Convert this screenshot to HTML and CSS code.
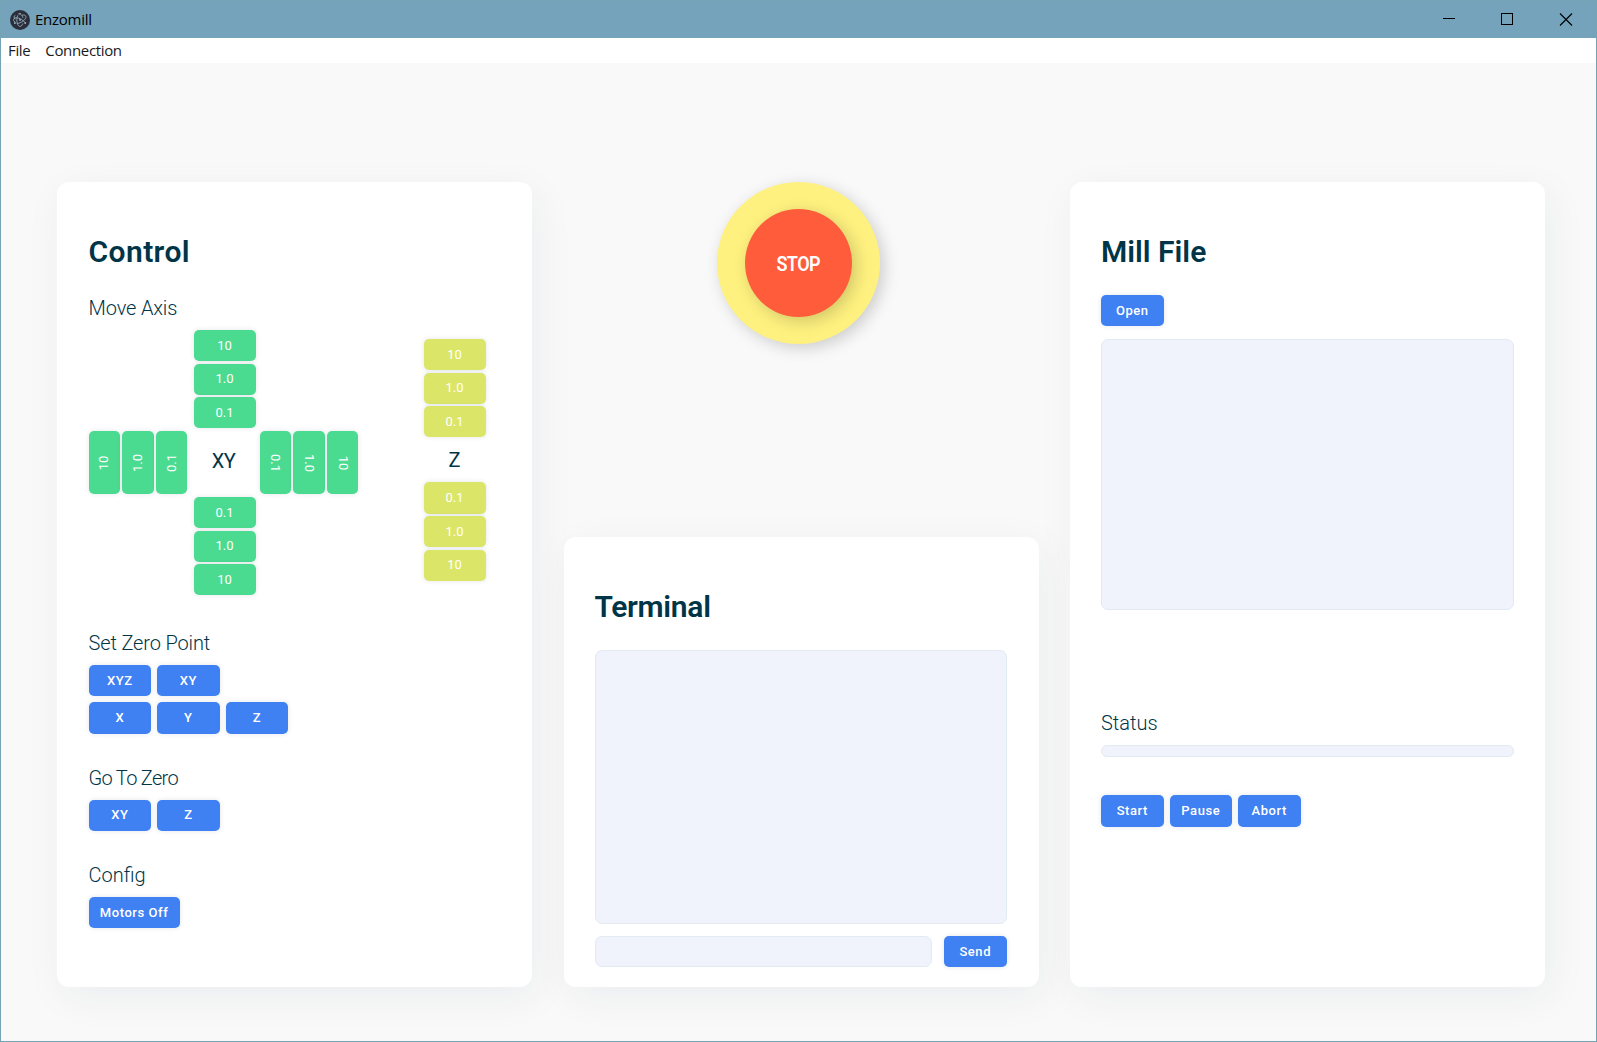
FILE: index.html
```html
<!DOCTYPE html>
<html lang="en">
<head>
<meta charset="utf-8">
<title>Enzomill</title>
<link rel="stylesheet" href="styles.css">
</head>
<body>
<div class="window">
  <header class="titlebar">
    <svg class="app-icon" width="20" height="20" viewBox="0 0 20 20">
      <circle cx="10" cy="10" r="10" fill="#2b2e3a"/>
      <g fill="none" stroke="#9fb9c6" stroke-width="0.8" stroke-linecap="round">
        <path d="M4.6 11.8C3.6 10.6 3.3 9.5 3.8 8.7c.9-1.5 4.200-1.300 7.500.6 1.500.9 2.700 1.900 3.500 2.900"/>
        <path d="M12.500 5.100c1.500-.3 2.700 0 3.200.8.900 1.500-.9 4.200-4.200 6.100-1.500.9-3 1.400-4.200 1.600"/>
        <path d="M12.700 13.800C12.200 15.500 11.200 16.400 10 16.400c-1.700 0-3.200-2.900-3.200-6.500 0-1.700.3-3.200.9-4.300"/>
        <path d="M8.500 3.900C10 3.200 11.900 4.500 12.900 7.500M5 5.400c-1.200.3-1.300 1.800 0 3.500"/>
      </g>
      <g fill="#9fb9c6"><circle cx="10" cy="9.900" r="0.9"/><circle cx="10" cy="3.800" r="0.8"/><circle cx="4.900" cy="13" r="0.9"/><circle cx="15.200" cy="13" r="0.9"/></g>
    </svg>
    <span class="app-name">Enzomill</span>
    <svg class="window-controls" width="132" height="14" viewBox="0 0 132 14" fill="none" stroke="#000">
      <path d="M0 5.5h12"/>
      <rect x="58.5" y="0.5" width="11" height="11"/>
      <path d="M117 0.5l12 12M129 0.5l-12 12" stroke-width="1.1"/>
    </svg>
  </header>
  <nav class="menubar"><span class="menu-file">File</span><span class="menu-connection">Connection</span></nav>

  <main class="workspace">
    <section class="card control">
      <h1>Control</h1>
      <h2>Move Axis</h2>
      <div class="axes">
        <div class="xy-pad">
          <div class="stack up"><button class="btn jog">10</button><button class="btn jog">1.0</button><button class="btn jog">0.1</button></div>
          <div class="row left"><button class="btn jog tall ccw"><span>10</span></button><button class="btn jog tall ccw"><span>1.0</span></button><button class="btn jog tall ccw"><span>0.1</span></button></div>
          <div class="axis-name">XY</div>
          <div class="row right"><button class="btn jog tall cw"><span>0.1</span></button><button class="btn jog tall cw"><span>1.0</span></button><button class="btn jog tall cw"><span>10</span></button></div>
          <div class="stack down"><button class="btn jog">0.1</button><button class="btn jog">1.0</button><button class="btn jog">10</button></div>
        </div>
        <div class="z-pad">
          <div class="stack"><button class="btn jog lime">10</button><button class="btn jog lime">1.0</button><button class="btn jog lime">0.1</button></div>
          <div class="axis-name">Z</div>
          <div class="stack"><button class="btn jog lime">0.1</button><button class="btn jog lime">1.0</button><button class="btn jog lime">10</button></div>
        </div>
      </div>
      <h2>Set Zero Point</h2>
      <div class="buttons"><button class="btn">XYZ</button><button class="btn">XY</button></div>
      <div class="buttons second"><button class="btn">X</button><button class="btn">Y</button><button class="btn">Z</button></div>
      <h2 class="goto-title">Go To Zero</h2>
      <div class="buttons"><button class="btn">XY</button><button class="btn">Z</button></div>
      <h2 class="config-title">Config</h2>
      <div class="buttons"><button class="btn wide">Motors Off</button></div>
    </section>

    <div class="middle">
      <div class="stop-ring"><button class="stop"><span>STOP</span></button></div>
      <section class="card terminal">
        <h1>Terminal</h1>
        <div class="field log"></div>
        <div class="send-row"><div class="field command"></div><button class="btn">Send</button></div>
      </section>
    </div>

    <section class="card mill">
      <h1>Mill File</h1>
      <div class="buttons"><button class="btn">Open</button></div>
      <div class="field preview"></div>
      <h2 class="status-title">Status</h2>
      <div class="field progress"></div>
      <div class="buttons"><button class="btn">Start</button><button class="btn">Pause</button><button class="btn">Abort</button></div>
    </section>
  </main>
</div>
</body>
</html>
```
FILE: styles.css
```css
* { box-sizing: border-box; }
body { margin: 0; font-family: Roboto, sans-serif; color: #003547; }
h1, h2 { margin: 0; }

.window {
  width: 1597px;
  height: 1042px;
  overflow: hidden;
  border: 1px solid #74a3b5;
  background: #f9f9f9;
}
.titlebar {
  display: flex;
  align-items: center;
  height: 37px;
  padding: 0 21px 0 9px;
  background: #74a3bb;
}
.app-name {
  margin: -2px 0 0 5px;
  font: 15px/20px "Open Sans", sans-serif;
  letter-spacing: -0.25px;
  color: #000;
}
.window-controls { margin-left: auto; }
.menubar {
  display: flex;
  gap: 15px;
  height: 25px;
  padding-left: 7px;
  background: #fff;
  font: 15px/25px "Open Sans", sans-serif;
  letter-spacing: -0.35px;
  color: #1a1a1a;
}

.workspace {
  display: flex;
  justify-content: space-between;
  height: 924px;
  padding: 119px 51px 0 56px;
}
.card {
  width: 475px;
  padding: 52px 31px 0;
  border-radius: 12px;
  background: #fff;
  box-shadow: 5px 10px 40px rgba(0, 53, 71, 0.06);
}
.control, .mill { height: 805px; }
h1 {
  font-size: 30px;
  line-height: 36px;
  font-weight: 600;
  letter-spacing: 0.4px;
}
h2 {
  height: 24px;
  margin: 0 0 10px;
  font-size: 20px;
  line-height: 24px;
  font-weight: 300;
  letter-spacing: -0.15px;
}
.control { padding-left: 31.6px; }
.control h1 { margin-bottom: 26px; }

.btn {
  display: flex;
  align-items: center;
  justify-content: center;
  width: 62.5px;
  height: 31.3px;
  padding: 0;
  border: 0;
  border-radius: 5px;
  background: #3f80f2;
  box-shadow: 0 0 5px rgba(0, 53, 71, 0.12);
  font: 500 13px/16px Roboto, sans-serif;
  letter-spacing: 0.55px;
  color: #fff;
}
.btn.wide { width: 91px; }
.buttons { display: flex; gap: 6px; }
.second { margin-top: 6px; }

.axes { display: flex; height: 266px; margin-bottom: 35px; }
.xy-pad {
  display: grid;
  grid-template-columns: 99px 72px 99px;
  grid-template-rows: 101px 63px 102px;
}
.stack { display: flex; flex-direction: column; gap: 2.3px; }
.row { display: flex; gap: 2.5px; }
.up { grid-area: 1 / 2; padding-left: 6px; }
.down { grid-area: 3 / 2; padding: 3px 0 0 6px; }
.left { grid-area: 2 / 1; }
.right { grid-area: 2 / 3; }
.axis-name {
  font-size: 20px;
  line-height: 24px;
  text-align: center;
}
.xy-pad .axis-name { grid-area: 2 / 2; padding: 18px 0 0; letter-spacing: -0.5px; }
.z-pad { width: 62px; margin-left: 65px; padding-top: 9px; }
.z-pad .axis-name { padding: 11px 0 10px; }
.jog { width: 62px; background: #4bdb90; letter-spacing: 0; font-weight: 400; }
.lime { background: #dbe669; }
.tall { width: 31.3px; height: 63px; }
.ccw span { transform: rotate(-90deg); }
.cw span { transform: rotate(90deg); }
.goto-title { margin-top: 32px; letter-spacing: -0.7px; }
.config-title { margin-top: 32px; letter-spacing: 0; }

.middle {
  display: flex;
  flex-direction: column;
  align-items: center;
  justify-content: space-between;
  height: 805px;
}
.stop-ring {
  display: flex;
  align-items: center;
  justify-content: center;
  width: 163px;
  height: 162px;
  margin-right: 5px;
  border-radius: 50%;
  background: #fef17f;
  box-shadow: 4px 4px 16px rgba(0, 0, 0, 0.18);
}
.stop {
  width: 107px;
  height: 108px;
  padding: 2px 0 0;
  border: 0;
  border-radius: 50%;
  background: #ff5c3b;
  box-shadow: 4px 4px 16px rgba(0, 0, 0, 0.18);
  font: 600 20px/24px Roboto, sans-serif;
  letter-spacing: -0.6px;
  color: #fff;
}
.stop span { display: inline-block; transform: scaleX(0.9); }
.field {
  border: 1px solid #e2eaf2;
  border-radius: 7px;
  background: #f0f3fc;
}
.terminal { height: 450px; }
.terminal h1 { margin-bottom: 25px; letter-spacing: -0.3px; }
.log { width: 412px; height: 274px; }
.send-row { display: flex; justify-content: space-between; width: 412px; margin-top: 12px; }
.command { width: 337px; height: 31px; }

.mill h1 { margin-bottom: 25px; letter-spacing: 0; }
.preview { width: 413px; height: 271px; margin-top: 13px; }
.status-title { margin-top: 101px; letter-spacing: 0; }
.progress { width: 413px; height: 12px; margin-bottom: 38px; }
```
